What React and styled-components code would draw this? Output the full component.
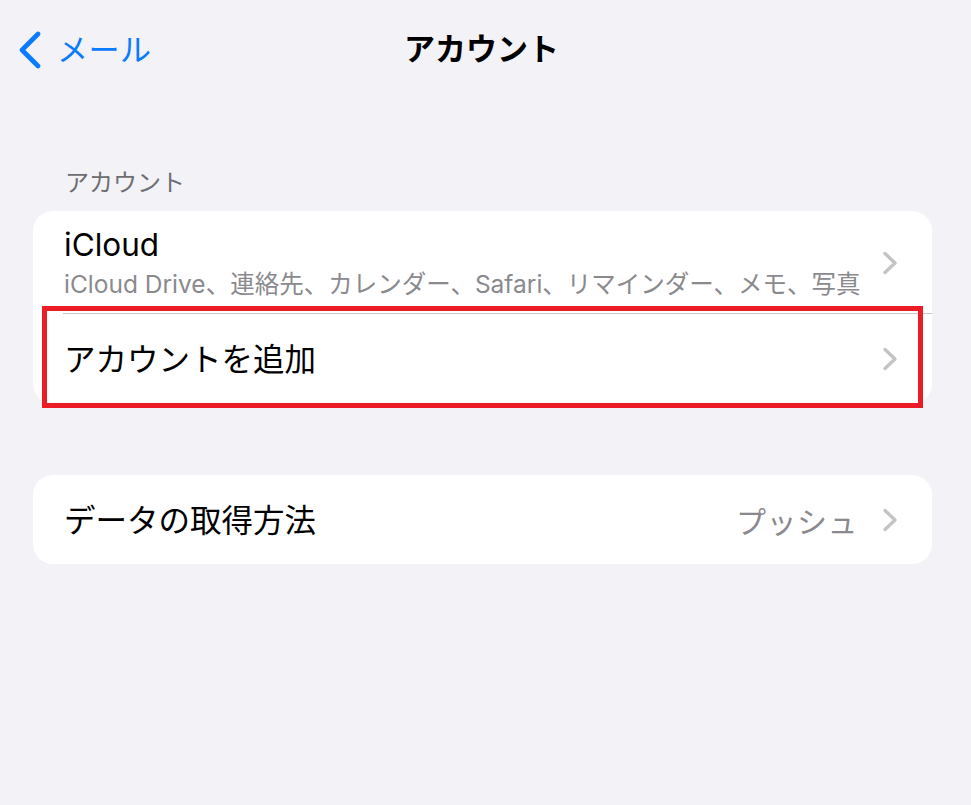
import React from 'react';
import styled, { createGlobalStyle } from 'styled-components';

const GlobalStyle = createGlobalStyle`
  html, body {
    margin: 0;
    padding: 0;
    background: #f2f2f7;
  }
  body {
    font-family: Inter, "Noto Sans CJK JP", sans-serif;
    -webkit-font-smoothing: antialiased;
  }
`;

const Page = styled.div`
  width: 971px;
  height: 805px;
  background: #f2f2f7;
  padding: 0 39px 0 33px;
  box-sizing: border-box;
`;

const NavBar = styled.header`
  position: relative;
  height: 96px;
  display: flex;
  align-items: center;
  justify-content: center;
  margin: 0 -39px 0 -33px;
`;

const BackButton = styled.div`
  position: absolute;
  left: 17px;
  top: 31px;
  display: flex;
  align-items: center;
  gap: 14px;
  color: #0a7aff;
  font-size: 31px;
  line-height: 36px;
  letter-spacing: 0.5px;
`;

const Title = styled.h1`
  margin: 0;
  font-size: 31px;
  font-weight: 700;
  color: #000;
  line-height: 36px;
  margin-top: 2px;
  margin-left: -8px;
`;

const SectionHeader = styled.div`
  margin: 72px 0 13px 32px;
  font-size: 24px;
  line-height: 30px;
  color: #6d6d72;
`;

const Card = styled.div`
  background: #fff;
  border-radius: 20px;
  margin-bottom: ${p => p.$gap || 0}px;
`;

const Row = styled.div`
  position: relative;
  display: flex;
  align-items: center;
  height: ${p => p.$height}px;
  padding: 0 34px 0 31px;
  box-sizing: border-box;
  ${p => p.$divider && `
    &::after {
      content: '';
      position: absolute;
      left: 30px;
      right: 0;
      bottom: 0;
      height: 1px;
      background: #c6c6c8;
    }
  `}
`;

const RowText = styled.div`
  flex: 1;
  display: flex;
  flex-direction: column;
  justify-content: center;
  min-width: 0;
`;

const Label = styled.div`
  font-size: 31.5px;
  line-height: 38px;
  color: #000;
  white-space: nowrap;
  margin-top: ${p => p.$shift || 0}px;
`;

const Sub = styled.div`
  font-size: 24.5px;
  line-height: 32px;
  color: #8a8a8e;
  white-space: nowrap;
  margin-top: 4px;
`;

const Value = styled.div`
  font-size: 30px;
  color: #8a8a8e;
  margin-right: 24px;
  letter-spacing: 0.5px;
`;

const Highlight = styled.div`
  position: absolute;
  left: 9px;
  right: 9px;
  top: -8px;
  bottom: -4px;
  border: 5px solid #ec1c24;
  pointer-events: none;
`;

const Chevron = () => (
  <svg width="16" height="24" viewBox="0 0 16 24" fill="none">
    <path d="M3 2.5 L13 12 L3 21.5" stroke="#c4c4c7" strokeWidth="3.4" strokeLinecap="round" strokeLinejoin="round" />
  </svg>
);

const BackChevron = () => (
  <svg width="26" height="38" viewBox="0 0 26 38" fill="none">
    <path d="M21 3 L5 19 L21 35" stroke="#0a7aff" strokeWidth="4.6" strokeLinecap="round" strokeLinejoin="round" />
  </svg>
);

export default function App() {
  return (
    <>
      <GlobalStyle />
      <Page>
        <NavBar>
          <BackButton>
            <BackChevron />
            <span>メール</span>
          </BackButton>
          <Title>アカウント</Title>
        </NavBar>
        <SectionHeader>アカウント</SectionHeader>
        <Card $gap={71}>
          <Row $height={103} $divider>
            <RowText>
              <Label>iCloud</Label>
              <Sub>iCloud Drive、連絡先、カレンダー、Safari、リマインダー、メモ、写真</Sub>
            </RowText>
            <Chevron />
          </Row>
          <Row $height={90}>
            <RowText>
              <Label $shift={2}>アカウントを追加</Label>
            </RowText>
            <Chevron />
            <Highlight />
          </Row>
        </Card>
        <Card>
          <Row $height={89}>
            <RowText>
              <Label $shift={2}>データの取得方法</Label>
            </RowText>
            <Value>プッシュ</Value>
            <Chevron />
          </Row>
        </Card>
      </Page>
    </>
  );
}
